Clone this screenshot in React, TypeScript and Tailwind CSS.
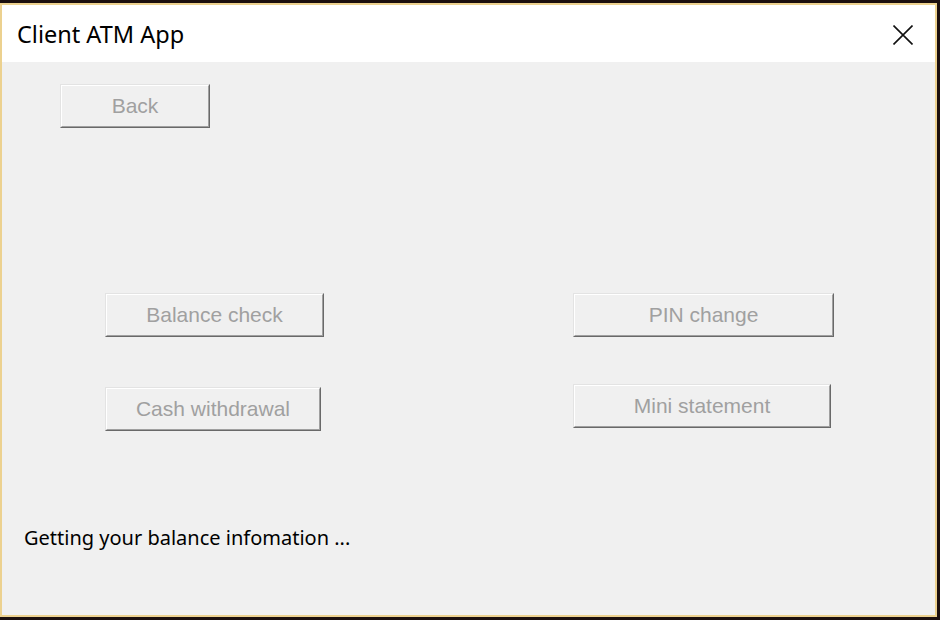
import React from "react";

function WinButton({ label, className }: { label: string; className: string }) {
  return (
    <div
      className={`h-[44px] border border-t-[#e3e3e3] border-l-[#e3e3e3] border-b-[#696969] border-r-[#696969] ${className}`}
    >
      <div className="flex h-full w-full items-center justify-center border border-t-white border-l-white border-b-[#a0a0a0] border-r-[#a0a0a0] bg-[#f0f0f0] text-[21px] text-[#a0a0a0] [font-family:'Liberation_Sans',Arial,sans-serif]">
        {label}
      </div>
    </div>
  );
}

export default function App() {
  return (
    <div className="h-[620px] w-[940px] overflow-hidden bg-[#1b0f0e] pt-[3px] pr-[3px] pb-[3px]">
      <div className="flex h-full w-full flex-col border-2 border-[#ecd18f]">
        <div className="flex h-[57px] shrink-0 items-center justify-between bg-white pl-[15px] pr-[22px]">
          <span className="mt-[2px] text-[23.5px] text-black [font-family:'Noto_Sans',sans-serif]">Client ATM App</span>
          <svg width="20" height="20" viewBox="0 0 20 20" className="mt-[2px]">
            <path d="M0.5 0.5 L19.5 19.5 M19.5 0.5 L0.5 19.5" stroke="#111" strokeWidth="1.6" fill="none" />
          </svg>
        </div>
        <div className="flex flex-1 flex-col bg-[#f0f0f0]">
          <WinButton label="Back" className="ml-[58px] mt-[22px] w-[150px]" />
          <div className="mt-[165px] flex items-start">
            <WinButton label="Balance check" className="ml-[103px] w-[219px]" />
            <WinButton label="PIN change" className="ml-[249px] w-[261px]" />
          </div>
          <div className="flex items-start">
            <WinButton label="Cash withdrawal" className="ml-[103px] mt-[50px] w-[216px]" />
            <WinButton label="Mini statement" className="ml-[252px] mt-[47px] w-[258px]" />
          </div>
          <div className="ml-[22px] mt-[93px] text-[20px] leading-[28px] text-black [font-family:'Noto_Sans',sans-serif]">
            Getting your balance infomation ...
          </div>
        </div>
      </div>
    </div>
  );
}
